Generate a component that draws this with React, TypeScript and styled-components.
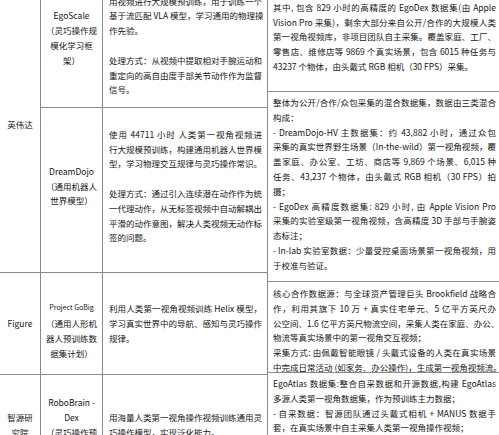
import React from 'react';
import styled, { createGlobalStyle, css } from 'styled-components';

const LINE = 14.8;
const RULE = '1px solid #8a8a8a';

const Global = createGlobalStyle`
  html, body { margin: 0; padding: 0; background: #ffffff; overflow: hidden; }
  body {
    font-family: "Noto Sans CJK SC", "Noto Sans", sans-serif;
    color: #151515;
  }
`;

const Sheet = styled.div`
  display: flex;
  align-items: flex-start;
  margin-top: -23px;
  width: 504px;
  font-size: 8.5px;
  line-height: ${LINE}px;
`;

const LeftTable = styled.div`
  display: grid;
  grid-template-columns: 41px 62px 165px;
  grid-template-rows: 131px 165px 102px 101px;
  flex: none;
`;

const BaseCell = styled.div<{ $pt?: number; $pb?: number }>`
  box-sizing: border-box;
  border-right: ${RULE};
  border-bottom: ${RULE};
  display: flex;
  flex-direction: column;
  justify-content: center;
  padding-top: ${(p) => p.$pt ?? 0}px;
  padding-bottom: ${(p) => p.$pb ?? 0}px;
  min-width: 0;
`;

const CompanyCell = styled(BaseCell)<{ $span?: number }>`
  grid-row: span ${(p) => p.$span ?? 1};
  padding-left: 4px;
  padding-right: 4px;
  text-align: center;
`;

const ModelCell = styled(BaseCell)`
  padding-left: 3px;
  padding-right: 3px;
  text-align: center;
`;

const MethodCell = styled(BaseCell)`
  padding-left: 6px;
  padding-right: 5px;
`;

const SourceColumn = styled.div`
  display: flex;
  flex-direction: column;
  width: 236px;
  flex: none;
`;

const SourceCell = styled(BaseCell)<{ $h: number }>`
  height: ${(p) => p.$h}px;
  justify-content: flex-start;
  padding-left: 5px;
  padding-right: 7px;
`;

const TextLine = styled.div<{ $end?: boolean }>`
  white-space: nowrap;
  text-align: justify;
  text-align-last: ${(p) => (p.$end ? 'left' : 'justify')};
`;

const CenterLine = styled.div<{ $small?: boolean }>`
  white-space: nowrap;
  ${(p) =>
    p.$small &&
    css`
      font-size: 7px;
      line-height: 18px;
    `}
`;

const BlankLine = styled.div`
  height: ${LINE}px;
`;

const Paras = ({ paras, gap }: { paras: string[][]; gap?: boolean }) => (
  <>
    {paras.map((p, i) => (
      <React.Fragment key={i}>
        {gap && i > 0 && <BlankLine />}
        {p.map((l, j) => (
          <TextLine key={j} $end={j === p.length - 1}>
            {l}
          </TextLine>
        ))}
      </React.Fragment>
    ))}
  </>
);

const Centered = ({ lines, smallFirst }: { lines: string[]; smallFirst?: boolean }) => (
  <>
    {lines.map((l, i) => (
      <CenterLine key={i} $small={smallFirst && i === 0}>
        {l}
      </CenterLine>
    ))}
  </>
);

export default function App() {
  return (
    <>
      <Global />
      <Sheet>
        <LeftTable>
          <CompanyCell $span={2}>
            <Centered lines={['英伟达']} />
          </CompanyCell>
          <ModelCell $pb={8}>
            <Centered lines={['EgoScale', '（灵巧操作规', '模化学习框', '架）']} />
          </ModelCell>
          <MethodCell $pb={8}>
            <Paras
              gap
              paras={[
                [
                  '使用 20854 小时人类第一视角视频，利',
                  '用视频进行大规模预训练，用于训练一个',
                  '基于流匹配 VLA 模型，学习通用的物理操',
                  '作先验。',
                ],
                [
                  '处理方式：从视频中提取相对手腕运动和',
                  '重定向的高自由度手部关节动作作为监督',
                  '信号。',
                ],
              ]}
            />
          </MethodCell>

          <ModelCell $pb={8}>
            <Centered lines={['DreamDojo', '（通用机器人', '世界模型）']} />
          </ModelCell>
          <MethodCell $pb={8}>
            <Paras
              gap
              paras={[
                [
                  '使用 44711 小时 人类第一视角视频进',
                  '行大规模预训练，构建通用机器人世界模',
                  '型，学习物理交互规律与灵巧操作常识。',
                ],
                [
                  '处理方式：通过引入连续潜在动作作为统',
                  '一代理动作，从无标签视频中自动解耦出',
                  '平滑的动作意图，解决人类视频无动作标',
                  '签的问题。',
                ],
              ]}
            />
          </MethodCell>

          <CompanyCell>
            <Centered lines={['Figure']} />
          </CompanyCell>
          <ModelCell $pt={12}>
            <Centered smallFirst lines={['Project GoBig', '（通用人形机', '器人预训练数', '据集计划）']} />
          </ModelCell>
          <MethodCell>
            <Paras
              paras={[
                [
                  '利用人类第一视角视频训练 Helix 模型，',
                  '学习真实世界中的导航、感知与灵巧操作',
                  '规律。',
                ],
              ]}
            />
          </MethodCell>

          <CompanyCell>
            <Centered lines={['智源研', '究院']} />
          </CompanyCell>
          <ModelCell>
            <Centered lines={['RoboBrain -', 'Dex', '（灵巧操作预', '训练模型）']} />
          </ModelCell>
          <MethodCell>
            <Paras
              paras={[['用海量人类第一视角操作视频训练通用灵', '巧操作模型，实现泛化能力。']]}
            />
          </MethodCell>
        </LeftTable>

        <SourceColumn>
          <SourceCell $h={115} $pt={8}>
            <Paras
              paras={[
                [
                  '数据来源：约 20854 小时人类第一视角视频数据，',
                  '其中, 包含 829 小时的高精度的 EgoDex 数据集(由 Apple',
                  'Vision Pro 采集)，剩余大部分来自公开/合作的大规模人类',
                  '第一视角视频库，非项目团队自主采集。覆盖家庭、工厂、',
                  '零售店、维修店等 9869 个真实场景，包含 6015 种任务与',
                  '43237 个物体，由头戴式 RGB 相机（30 FPS）采集。',
                ],
              ]}
            />
          </SourceCell>
          <SourceCell $h={190} $pt={3}>
            <Paras
              paras={[
                ['整体为公开/合作/众包采集的混合数据集，数据由三类混合', '构成：'],
                [
                  '- DreamDojo-HV 主数据集：约 43,882 小时，通过众包',
                  '采集的真实世界野生场景（In-the-wild）第一视角视频，覆',
                  '盖家庭、办公室、工坊、商店等 9,869 个场景、6,015 种',
                  '任务、43,237 个物体，由头戴式 RGB 相机（30 FPS）拍',
                  '摄；',
                ],
                [
                  '- EgoDex 高精度数据集: 829 小时, 由 Apple Vision Pro',
                  '采集的实验室级第一视角视频，含高精度 3D 手部与手腕姿',
                  '态标注；',
                ],
                ['- In-lab 实验室数据：少量受控桌面场景第一视角视频，用', '于校准与验证。'],
              ]}
            />
          </SourceCell>
          <SourceCell $h={91} $pt={4}>
            <Paras
              paras={[
                [
                  '核心合作数据源：与全球资产管理巨头 Brookfield 战略合',
                  '作，利用其旗下 10 万 + 真实住宅单元、5 亿平方英尺办',
                  '公空间、1.6 亿平方英尺物流空间，采集人类在家庭、办公、',
                  '物流等真实场景中的第一视角交互视频；',
                ],
                [
                  '采集方式: 由佩戴智能眼镜 / 头戴式设备的人类在真实场景',
                  '中完成日常活动 (如家务、办公操作)，生成第一视角视频流。',
                ],
              ]}
            />
          </SourceCell>
          <SourceCell $h={110} $pt={3}>
            <Paras
              paras={[
                ['EgoAtlas 数据集:整合自采数据和开源数据,构建 EgoAtlas', '多源人类第一视角数据集，作为预训练主力数据；'],
                ['- 自采数据：智源团队通过头戴式相机 + MANUS 数据手', '套，在真实场景中自主采集人类第一视角操作视频；'],
              ]}
            />
          </SourceCell>
        </SourceColumn>
      </Sheet>
    </>
  );
}
